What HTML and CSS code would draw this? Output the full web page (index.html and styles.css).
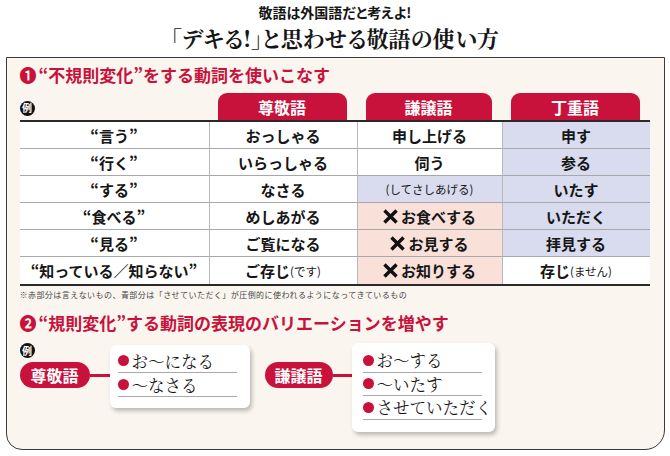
FILE: index.html
```html
<!DOCTYPE html>
<html lang="ja">
<head>
<meta charset="utf-8">
<link rel="stylesheet" href="styles.css">
</head>
<body>
<div class="page">
  <header class="hdr">
    <div class="sub">敬語は外国語だと考えよ!</div>
    <h1 class="title">「デキる!」と思わせる敬語の使い方</h1>
  </header>
  <section class="panel">
    <h2 class="sec"><span class="num">❶</span>“不規則変化”をする動詞を使いこなす</h2>
    <div class="thead">
      <div><span class="ex">例</span></div>
      <div class="tab">尊敬語</div>
      <div class="tab">謙譲語</div>
      <div class="tab">丁重語</div>
    </div>
    <div class="tbody">
      <div class="c">“言う”</div>
      <div class="c">おっしゃる</div>
      <div class="c">申し上げる</div>
      <div class="c blue">申す</div>

      <div class="c">“行く”</div>
      <div class="c">いらっしゃる</div>
      <div class="c">伺う</div>
      <div class="c blue">参る</div>

      <div class="c">“する”</div>
      <div class="c">なさる</div>
      <div class="c blue"><span class="sm">(してさしあげる)</span></div>
      <div class="c blue">いたす</div>

      <div class="c">“食べる”</div>
      <div class="c">めしあがる</div>
      <div class="c pink"><svg class="x" viewBox="0 0 14 14" width="15" height="15"><path d="M2.5 2.5 L11.5 11.5 M11.5 2.5 L2.5 11.5" stroke="#111" stroke-width="3.2" stroke-linecap="square"/></svg>お食べする</div>
      <div class="c blue">いただく</div>

      <div class="c">“見る”</div>
      <div class="c">ご覧になる</div>
      <div class="c pink"><svg class="x" viewBox="0 0 14 14" width="15" height="15"><path d="M2.5 2.5 L11.5 11.5 M11.5 2.5 L2.5 11.5" stroke="#111" stroke-width="3.2" stroke-linecap="square"/></svg>お見する</div>
      <div class="c blue">拝見する</div>

      <div class="c">“知っている／知らない”</div>
      <div class="c">ご存じ<span class="sm">(です)</span></div>
      <div class="c pink"><svg class="x" viewBox="0 0 14 14" width="15" height="15"><path d="M2.5 2.5 L11.5 11.5 M11.5 2.5 L2.5 11.5" stroke="#111" stroke-width="3.2" stroke-linecap="square"/></svg>お知りする</div>
      <div class="c">存じ<span class="sm">(ません)</span></div>
    </div>
    <p class="note">※赤部分は言えないもの、青部分は「させていただく」が圧倒的に使われるようになってきているもの</p>

    <h2 class="sec sec2"><span class="num">❷</span>“規則変化”する動詞の表現のバリエーションを増やす</h2>
    <div class="vars">
      <div class="excol">
        <span class="ex">例</span>
        <div class="pill">尊敬語</div>
      </div>
      <div class="conn"></div>
      <div class="vbox vbox1">
        <div class="item"><span class="dot"></span>お〜になる</div>
        <div class="item"><span class="dot"></span>〜なさる</div>
      </div>
      <div class="pill pill2">謙譲語</div>
      <div class="conn conn2"></div>
      <div class="vbox vbox2">
        <div class="item"><span class="dot"></span>お〜する</div>
        <div class="item"><span class="dot"></span>〜いたす</div>
        <div class="item"><span class="dot"></span>させていただく</div>
      </div>
    </div>
  </section>
</div>
</body>
</html>
```

FILE: styles.css
```css
body {
  margin: 0;
  background: #ffffff;
  font-family: "Noto Sans CJK JP", sans-serif;
  color: #161616;
}

.page {
  width: 670px;
}

.hdr {
  height: 57px;
  box-sizing: border-box;
  padding-top: 3px;
  text-align: center;
}

.sub {
  font-size: 14px;
  line-height: 18px;
  font-weight: 700;
  font-feature-settings: "palt";
}

.title {
  margin: 2px 0 0;
  font-family: "Noto Serif CJK JP", "Noto Sans CJK JP", serif;
  font-size: 22px;
  line-height: 30px;
  font-weight: 700;
  font-feature-settings: "palt";
}

.panel {
  margin-left: 6px;
  width: 659px;
  height: 393px;
  box-sizing: border-box;
  border: 1.5px solid #3a3a3a;
  border-radius: 0 0 20px 16px;
  background: #faf6ef;
  padding: 7px 0 0 12.5px;
}

.sec {
  margin: 0;
  font-size: 17px;
  line-height: 20px;
  font-weight: 700;
  color: #c8123c;
  white-space: nowrap;
}

.sec .num {
  margin-right: 2px;
}

.sec2 {
  margin-top: 12px;
}

.thead {
  display: grid;
  grid-template-columns: 189px 148px 145px 148px;
  height: 27px;
  margin-top: 8px;
}

.ex {
  display: inline-flex;
  align-items: center;
  justify-content: center;
  width: 15px;
  height: 15px;
  border-radius: 50%;
  background: #111;
  color: #fff;
  font-size: 10px;
  font-weight: 700;
  line-height: 1;
  margin-top: 1px;
}

.tab {
  margin: 0 10px 0 9px;
  background: #c8123c;
  color: #fff;
  border-radius: 9px 9px 0 0;
  display: flex;
  align-items: center;
  justify-content: center;
  font-size: 16px;
  font-weight: 700;
}

.tbody {
  display: grid;
  grid-template-columns: 189px 148px 145px 148px;
  width: 630px;
  border-top: 2px solid #2a2a2a;
  border-bottom: 2px solid #2a2a2a;
}

.c {
  height: 27px;
  box-sizing: border-box;
  border-bottom: 1px solid #a8a8a8;
  border-left: 1px solid #b8b8b8;
  display: flex;
  align-items: center;
  justify-content: center;
  font-size: 15px;
  font-weight: 700;
  white-space: nowrap;
  background: #ffffff;
}

.c:nth-child(4n+1) {
  border-left: 0;
}

.c:nth-last-child(-n+4) {
  border-bottom: 0;
}

.blue {
  background: #d8dcee;
}

.pink {
  background: #f9e0d9;
}

.sm {
  font-size: 11.5px;
  font-weight: 400;
}

.x {
  margin-right: 3px;
}

.note {
  margin: 3px 0 0;
  font-size: 8px;
  line-height: 12px;
  color: #444;
  letter-spacing: 0.45px;
}

.vars {
  display: flex;
  align-items: flex-start;
  margin-top: 10px;
}

.excol {
  width: 70px;
  display: flex;
  flex-direction: column;
  align-items: flex-start;
}

.excol .ex {
  margin-top: 0;
}

.pill {
  width: 70px;
  height: 26px;
  border-radius: 13px;
  background: #c8123c;
  color: #fff;
  display: flex;
  align-items: center;
  justify-content: center;
  font-size: 16px;
  font-weight: 700;
  margin-top: 4px;
  flex: none;
}

.pill2 {
  width: 68px;
  margin-left: 15px;
  margin-top: 19px;
}

.conn {
  width: 20px;
  height: 2.5px;
  background: #c8123c;
  margin-top: 31px;
  flex: none;
}

.conn2 {
  width: 19px;
}

.vbox {
  background: #fff;
  border-radius: 6px;
  box-shadow: 2px 3px 4px rgba(0, 0, 0, 0.25);
  box-sizing: border-box;
  flex: none;
}

.vbox1 {
  width: 140px;
  margin-top: 2px;
  padding: 4px 13px 11px 8px;
}

.vbox2 {
  width: 143px;
  padding: 6px 13px 12px 11px;
}

.item {
  height: 24px;
  box-sizing: border-box;
  border-bottom: 1px solid #a8a8a8;
  display: flex;
  align-items: center;
  font-family: "Noto Serif CJK JP", "Noto Sans CJK JP", serif;
  font-size: 16.5px;
  white-space: nowrap;
}

.vbox2 .item {
  height: 23.5px;
}

.dot {
  width: 11px;
  height: 11px;
  border-radius: 50%;
  background: #c8123c;
  margin-right: 3px;
  flex: none;
}
```
